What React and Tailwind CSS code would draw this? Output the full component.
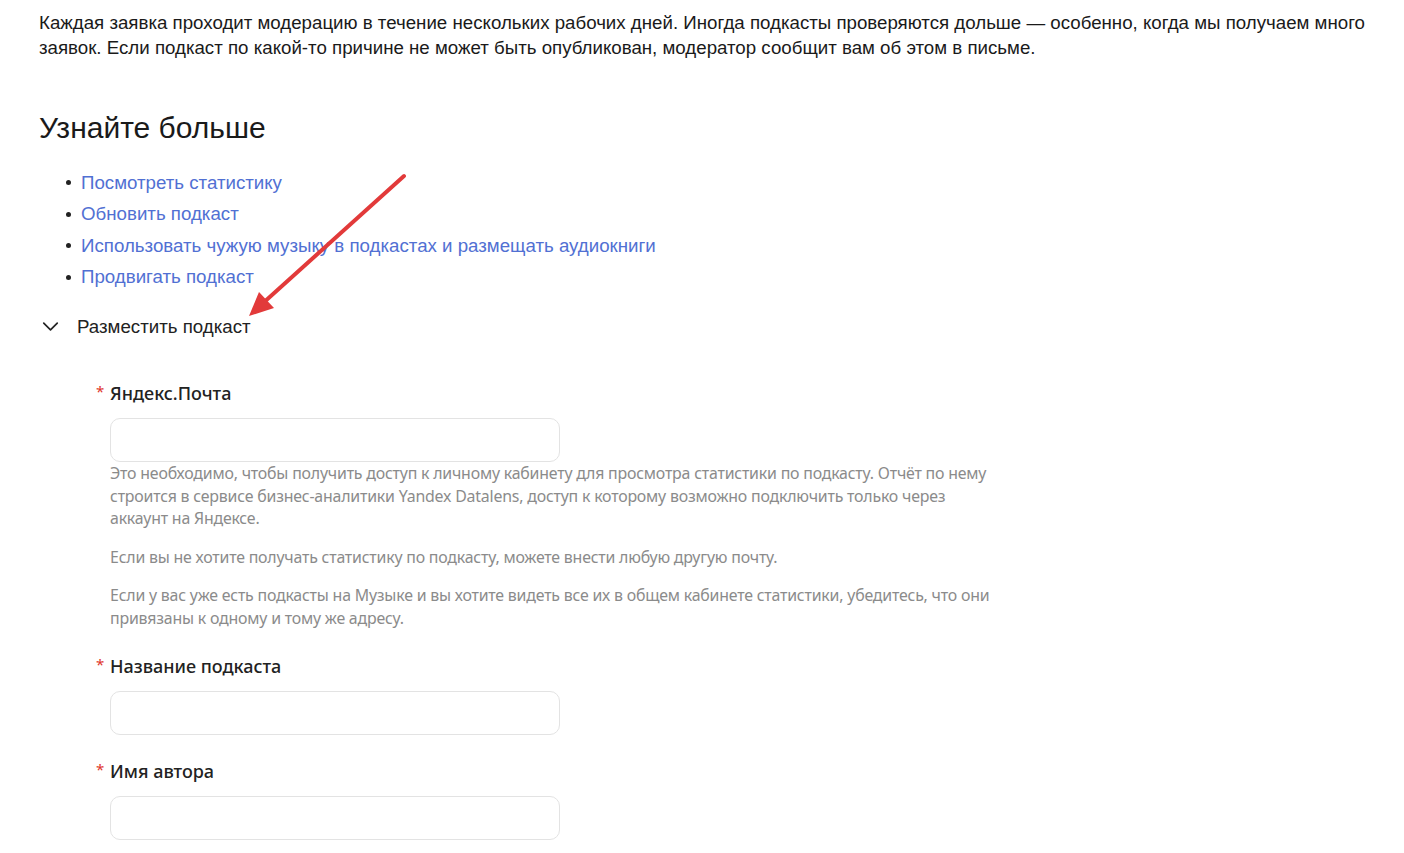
import { ChevronDown } from "lucide-react";

const links = [
  "Посмотреть статистику",
  "Обновить подкаст",
  "Использовать чужую музыку в подкастах и размещать аудиокниги",
  "Продвигать подкаст",
];

function Field({ label, children }) {
  return (
    <div>
      <div className="flex items-start">
        <span className="w-[14px] pt-[1px] text-[15px] leading-[20px] text-[#e0352b]">*</span>
        <span className="text-[18px] leading-[26px] font-medium text-[#222]">{label}</span>
      </div>
      <div className="mt-[12px] ml-[14px] h-[44px] w-[450px] rounded-[10px] border border-[#e3e3e3] bg-white" />
      {children}
    </div>
  );
}

export default function App() {
  return (
    <div className="relative min-h-[853px] bg-white font-['Liberation_Sans',Arial,sans-serif] text-[#1a1a1a]">
      <div className="px-[39px] pt-[10px]">
        <p className="text-[18.7px] leading-[25px]">
          Каждая заявка проходит модерацию в течение нескольких рабочих дней. Иногда подкасты проверяются дольше — особенно, когда мы получаем много заявок. Если подкаст по какой-то причине не может быть опубликован, модератор сообщит вам об этом в письме.
        </p>

        <h2 className="mt-[50px] text-[30px] leading-[36px]">Узнайте больше</h2>

        <ul className="mt-[21px] pl-[27px]">
          {links.map((t) => (
            <li key={t} className="flex items-center h-[31.5px] text-[18.7px]">
              <span className="mr-[10px] h-[5px] w-[5px] rounded-full bg-[#222]" />
              <a className="text-[#5170d3]">{t}</a>
            </li>
          ))}
        </ul>

        <div className="mt-[20px] flex items-center gap-[13px]">
          <ChevronDown className="h-[27px] w-[27px] -ml-[2px] text-[#222]" strokeWidth={1.5} />
          <span className="text-[18.7px] leading-[24px] text-[#222]">Разместить подкаст</span>
        </div>

        <div className="ml-[57px] mt-[40px] flex flex-col gap-[23px] font-['Noto_Sans',sans-serif]">
          <Field label="Яндекс.Почта">
            <div className="ml-[14px] w-[885px] text-[15.9px] leading-[22.6px] text-[#8b8b8b] tracking-[-0.2px]">
              <p>
                Это необходимо, чтобы получить доступ к личному кабинету для просмотра статистики по подкасту. Отчёт по нему строится в сервисе бизнес-аналитики Yandex Datalens, доступ к которому возможно подключить только через аккаунт на Яндексе.
              </p>
              <p className="mt-[16px]">Если вы не хотите получать статистику по подкасту, можете внести любую другую почту.</p>
              <p className="mt-[16px]">
                Если у вас уже есть подкасты на Музыке и вы хотите видеть все их в общем кабинете статистики, убедитесь, что они привязаны к одному и тому же адресу.
              </p>
            </div>
          </Field>
          <Field label="Название подкаста" />
          <Field label="Имя автора" />
        </div>
      </div>

      <svg className="pointer-events-none absolute left-0 top-0" width="1404" height="853">
        <line x1="404" y1="176" x2="262" y2="304" stroke="#e23a3a" strokeWidth="4" strokeLinecap="round" />
        <polygon points="249,316 259,292 274,308" fill="#e23a3a" />
      </svg>
    </div>
  );
}
